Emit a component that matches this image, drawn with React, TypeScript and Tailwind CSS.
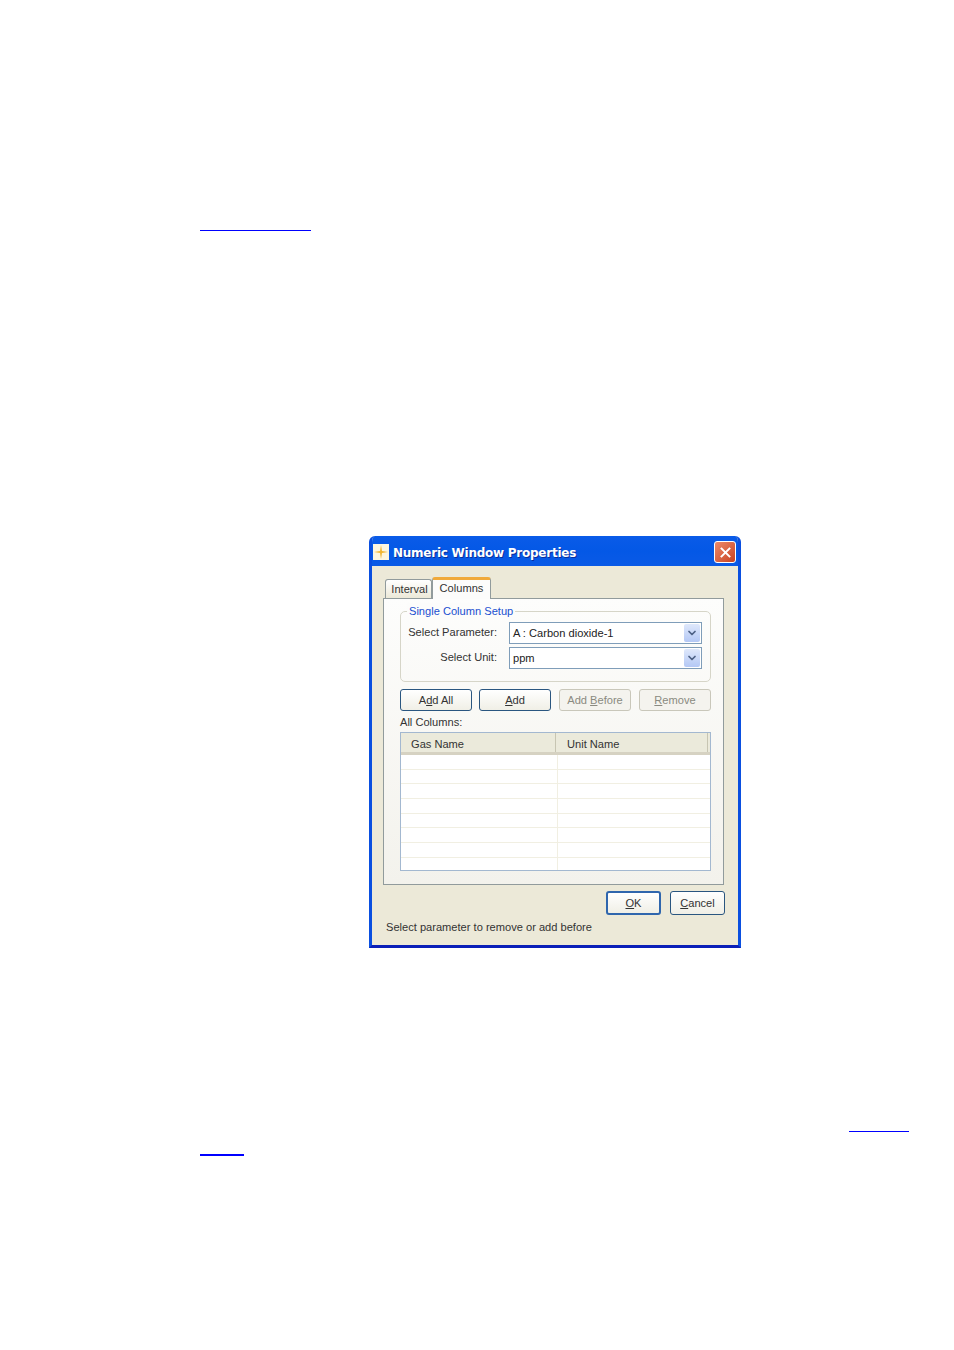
import type { ReactNode } from "react";
import { ChevronDown } from "lucide-react";

const font = "font-['Liberation_Sans',Arial,sans-serif]";
const rows = [0, 1, 2, 3, 4, 5, 6, 7];

function Combo({ value }: { value: string }) {
  return (
    <div className="flex h-[22px] w-[193px] items-center justify-between border border-[#7f9db9] bg-white pr-px pl-[3px]">
      <span className="text-[#222]">{value}</span>
      <div className="flex h-[18px] w-4 items-center justify-center rounded-[2px] bg-gradient-to-b from-[#dfe8fb] to-[#b4c8f5]">
        <ChevronDown className="h-3 w-3 text-[#4d6185]" strokeWidth={3.5} />
      </div>
    </div>
  );
}

function Btn({ children, disabled, extra = "" }: { children: ReactNode; disabled?: boolean; extra?: string }) {
  return (
    <button
      className={`flex h-[22px] w-[72px] items-center justify-center rounded-[3px] border ${extra} ${
        disabled
          ? "border-[#c9c7ba] bg-[#f4f3ee] text-[#8a8a80]"
          : "border-[#2a5680] bg-gradient-to-b from-white to-[#f0efe6] text-[#333]"
      }`}
    >
      <span>{children}</span>
    </button>
  );
}

export default function App() {
  return (
    <div className={`h-[1350px] w-[954px] overflow-hidden bg-white pt-[230px] text-[11.1px] ${font}`}>
      <div className="ml-[200px] h-px w-[111px] bg-[#0000ff]" />

      <div className="mt-[305px] ml-[369px] flex h-[412px] w-[372px] flex-col overflow-hidden rounded-t-[6px] border-x-[3px] border-b-[3px] border-x-[#0a4fe0] border-b-[#0a1fb8] bg-[#ece9d8]">
        {/* title bar */}
        <div className="-mx-[3px] flex h-[30px] shrink-0 items-center bg-gradient-to-b from-[#0a5be8] via-[#0458e6] to-[#0a5ae6] pr-[5px] pl-[4px]">
          <svg viewBox="0 0 16 16" className="mt-[1px] h-4 w-4 shrink-0">
            <rect width="16" height="16" fill="#fdf6e0" />
            <path d="M8 1 L9 7 L15 8 L9 9 L8 15 L7 9 L1 8 L7 7 Z" fill="#f2b632" />
          </svg>
          <span className="mt-[3px] ml-1 text-[12px] font-bold tracking-[-0.25px] whitespace-nowrap text-white font-['DejaVu_Sans',sans-serif] [text-shadow:1px_1px_0_#0a2f9c]">
            Numeric Window Properties
          </span>
          <div className="mt-[2px] ml-auto flex h-[22px] w-[22px] items-center justify-center rounded-[3px] border border-white bg-gradient-to-br from-[#ec8a6a] to-[#c8401c]">
            <svg viewBox="0 0 14 14" className="h-[13px] w-[13px]">
              <path d="M2 2 L12 12 M12 2 L2 12" stroke="white" strokeWidth="2.2" fill="none" />
            </svg>
          </div>
        </div>

        {/* tabs */}
        <div className="flex h-[32px] shrink-0 items-end pl-[13px]">
          <div className="flex h-[19px] w-[47px] items-center justify-center rounded-t-[3px] border border-b-0 border-[#919b9c] bg-gradient-to-b from-white to-[#ece9d8] pl-[2px] text-[#333]">
            Interval
          </div>
          <div className="relative z-10 -mb-px flex h-[22px] w-[59px] items-start justify-center rounded-t-[3px] border-x border-t-[3px] border-x-[#919b9c] border-t-[#f0a93a] bg-[#fcfcfb] text-[#333]">
            Columns
          </div>
        </div>

        {/* panel */}
        <div className="ml-[11px] h-[287px] w-[341px] shrink-0 border border-[#919b9c] bg-gradient-to-b from-[#fdfdfc] to-[#f3f2ec] pt-3 pl-4">
          <div className="relative h-[71px] w-[311px] rounded-[5px] border border-[#d6d5c8] pt-[10px]">
            <span className="absolute -top-[9px] left-[6px] bg-[#fcfcfb] px-[2px] whitespace-nowrap text-[#1a4fd0]">Single Column Setup</span>
            <div className="flex items-center gap-3">
              <span className="-mt-[2px] w-[96px] text-right whitespace-nowrap text-[#333]">Select Parameter:</span>
              <Combo value="A : Carbon dioxide-1" />
            </div>
            <div className="mt-[3px] flex items-center gap-3">
              <span className="-mt-[2px] w-[96px] text-right whitespace-nowrap text-[#333]">Select Unit:</span>
              <Combo value="ppm" />
            </div>
          </div>

          <div className="mt-[7px] flex gap-2">
            <Btn>
              A<u>d</u>d All
            </Btn>
            <Btn extra="-ml-px">
              <u>A</u>dd
            </Btn>
            <Btn disabled>
              Add <u>B</u>efore
            </Btn>
            <Btn disabled>
              <u>R</u>emove
            </Btn>
          </div>

          <div className="flex h-[21px] items-center pt-[2px] text-[#333]">All Columns:</div>

          <div className="h-[139px] w-[311px] overflow-hidden border border-[#a3b8d0] bg-white">
            <div className="flex h-[22px] border-b-[3px] border-b-[#d6d2c2] bg-[#ebeadb] text-[#333]">
              <div className="flex w-[155px] items-center border-r border-r-[#c7c5b2] pt-[3px] pl-[10px]">Gas Name</div>
              <div className="flex w-[152px] items-center border-r border-r-[#c7c5b2] pt-[3px] pl-[11px]">Unit Name</div>
            </div>
            {rows.map((r) => (
              <div key={r} className="flex h-[14.7px] border-b border-b-[#f1efe2]">
                <div className="w-[157px] border-r border-r-[#f1efe2]" />
              </div>
            ))}
          </div>
        </div>

        {/* bottom buttons */}
        <div className="mt-[6px] flex shrink-0 justify-end gap-[9px] pr-[13px]">
          <button className="flex h-6 w-[55px] items-center justify-center rounded-[3px] border-2 border-[#2f66ad] bg-gradient-to-b from-white to-[#f0efe6] text-[#333]">
            <span>
              <u>O</u>K
            </span>
          </button>
          <button className="flex h-6 w-[55px] items-center justify-center rounded-[3px] border border-[#2a5680] bg-gradient-to-b from-white to-[#f0efe6] text-[#333]">
            <span>
              <u>C</u>ancel
            </span>
          </button>
        </div>

        <div className="mt-[4px] pl-[14px] text-[#333]">Select parameter to remove or add before</div>
      </div>

      <div className="mt-[183px] ml-[849px] h-px w-[60px] bg-[#0000ff]" />
      <div className="mt-[22px] ml-[200px] h-[2px] w-[44px] bg-[#0000ff]" />
    </div>
  );
}
